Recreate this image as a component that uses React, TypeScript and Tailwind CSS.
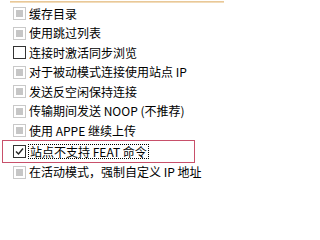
import React from "react";

type Item = { label: string; state: "disabled" | "unchecked" | "checked"; focus?: boolean };

const items: Item[] = [
  { label: "缓存目录", state: "disabled" },
  { label: "使用跳过列表", state: "disabled" },
  { label: "连接时激活同步浏览", state: "unchecked" },
  { label: "对于被动模式连接使用站点 IP", state: "disabled" },
  { label: "发送反空闲保持连接", state: "disabled" },
  { label: "传输期间发送 NOOP (不推荐)", state: "disabled" },
  { label: "使用 APPE 继续上传", state: "disabled" },
];

function Box({ state }: { state: Item["state"] }) {
  if (state === "disabled") {
    return (
      <div className="w-[13px] h-[13px] border border-[#c9c9c9] bg-white flex items-center justify-center shrink-0">
        <div className="w-[7px] h-[7px] bg-[#c6c6c6]" />
      </div>
    );
  }
  return (
    <div className="w-[13px] h-[13px] border border-[#333] bg-white flex items-center justify-center shrink-0">
      {state === "checked" && (
        <svg width="11" height="11" viewBox="0 0 11 11">
          <path d="M2 5.5 L4.5 8 L9 2.5" fill="none" stroke="#222" strokeWidth="1.4" />
        </svg>
      )}
    </div>
  );
}

function Row({ item }: { item: Item }) {
  return (
    <div className="h-[19.5px] flex items-center pl-[13px]">
      <Box state={item.state} />
      <span className="ml-[3px] text-[12px] leading-[14px] text-black whitespace-nowrap">{item.label}</span>
    </div>
  );
}

export default function App() {
  return (
    <div
      className="w-[224px] h-[201px] bg-white overflow-hidden relative"
      style={{ fontFamily: '"Noto Sans CJK SC", "Noto Sans", sans-serif' }}
    >
      <div className="ml-[10px] mt-[1px] h-[2px] bg-gradient-to-b from-[#e4be86] to-[#f6e6cc]" />
      <div className="mt-[1px]">
        {items.map((it) => (
          <Row key={it.label} item={it} />
        ))}
        <div className="ml-[2px] w-[193px] h-[23px] mt-[-1px] border border-[#c8506a] flex items-center pl-[10px]">
          <Box state="checked" />
          <span className="ml-[2px] px-[1px] text-[12px] leading-[13px] text-black whitespace-nowrap border border-dotted border-black">
            站点不支持 FEAT 命令
          </span>
        </div>
        <Row item={{ label: "在活动模式，强制自定义 IP 地址", state: "disabled" }} />
      </div>
    </div>
  );
}
